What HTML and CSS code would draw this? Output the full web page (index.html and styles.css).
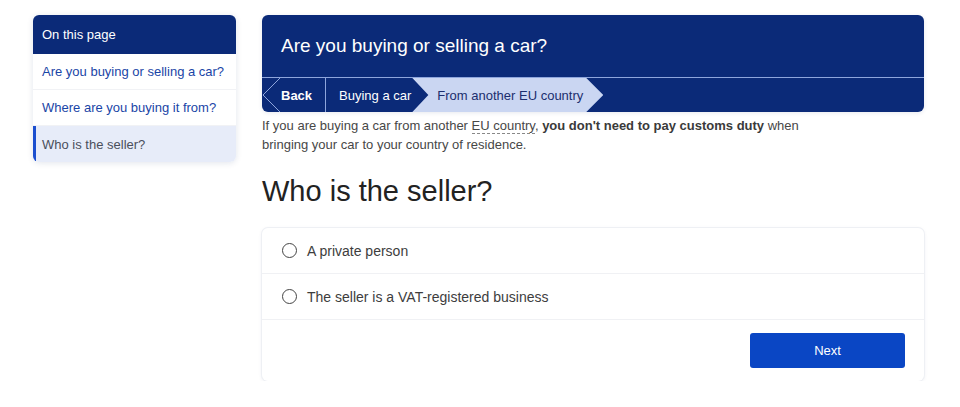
FILE: index.html
```html
<!DOCTYPE html>
<html lang="en">
<head>
<meta charset="utf-8">
<title>Who is the seller?</title>
<link rel="stylesheet" href="styles.css">
</head>
<body>
<div class="page">
  <nav class="toc">
    <div class="toc-head">On this page</div>
    <a class="toc-item" href="#">Are you buying or selling a car?</a>
    <a class="toc-item" href="#">Where are you buying it from?</a>
    <a class="toc-item active" href="#">Who is the seller?</a>
  </nav>
  <main class="main">
    <section class="hero">
      <h1 class="hero-title">Are you buying or selling a car?</h1>
      <div class="crumbs">
        <a class="crumb back" href="#"><svg class="back-chev" width="19" height="34" viewBox="0 0 19 34"><polyline points="18,0 1,17 18,34" fill="none" stroke="#8ea5dc" stroke-width="1"/></svg><span>Back</span></a>
        <a class="crumb mid" href="#">Buying a car</a>
        <span class="crumb current">From another EU country</span>
      </div>
    </section>
    <p class="intro"><span>If you are buying a car from another </span><abbr class="abbr" title="European Union">EU country</abbr><span>, </span><strong>you don't need to pay customs duty</strong><span> when </span><span>bringing your car to your country of residence.</span></p>
    <h2 class="question">Who is the seller?</h2>
    <form class="options">
      <label class="option"><span class="radio"></span>A private person</label>
      <label class="option"><span class="radio"></span>The seller is a VAT-registered business</label>
      <div class="actions"><button type="button" class="next">Next</button></div>
    </form>
  </main>
</div>
</body>
</html>
```
FILE: styles.css
```css
* { box-sizing: border-box; }
html, body { margin: 0; background: #ffffff; }
body {
  font-family: "Liberation Sans", Arial, sans-serif;
  font-size: 13px;
  color: #454545;
}
.page {
  display: flex;
  align-items: flex-start;
  gap: 26px;
  padding: 15px 36px 0 33px;
}
.toc {
  width: 203px;
  flex: none;
  display: flex;
  flex-direction: column;
  border-radius: 6px;
  overflow: hidden;
  background: #fff;
  box-shadow: 0 1px 6px rgba(20, 40, 100, 0.12);
}
.toc-head {
  background: #0b2a78;
  color: #fff;
  height: 39px;
  display: flex;
  align-items: center;
  padding: 0 9px;
  font-size: 13px;
}
.toc-item {
  height: 36px;
  display: flex;
  align-items: center;
  padding: 0 9px;
  color: #1a45a6;
  text-decoration: none;
  border-bottom: 1px solid #f1f2f5;
  font-size: 13px;
}
.toc-item.active {
  background: #e7ecf9;
  color: #4a4f5c;
  border-left: 3px solid #1c4fcf;
  padding-left: 6px;
  border-bottom: none;
}
.main {
  flex: 1;
  min-width: 0;
  display: flex;
  flex-direction: column;
}
.hero {
  background: #0b2a78;
  border-radius: 6px;
  overflow: hidden;
  box-shadow: 0 1px 4px rgba(20, 40, 100, 0.1);
}
.hero-title {
  margin: 0;
  height: 63px;
  display: flex;
  align-items: center;
  padding: 0 19px;
  color: #fff;
  font-size: 19px;
  font-weight: normal;
  border-bottom: 1px solid #8ea5dc;
}
.crumbs {
  display: flex;
  height: 34px;
  align-items: stretch;
}
.crumb {
  display: flex;
  align-items: center;
  color: #fff;
  text-decoration: none;
  font-size: 13px;
}
.back {
  font-weight: bold;
  padding-right: 13px;
  border-right: 1px solid #8ea5dc;
}
.back-chev { display: block; flex: none; }
.mid {
  padding: 0 1px 0 13px;
}
.current {
  background: #cad6f2;
  color: #1b2e6e;
  padding: 0 20px 0 25px;
  clip-path: polygon(0 0, calc(100% - 17px) 0, 100% 50%, calc(100% - 17px) 100%, 0 100%, 16px 50%);
}
.intro {
  margin: 4px 0 0;
  line-height: 19px;
  max-width: 545px;
  font-size: 13px;
  color: #474747;
}
.intro strong { color: #3a3a3a; }
.abbr {
  text-decoration: none;
  border-bottom: 1px dashed #888;
}
.question {
  margin: 20px 0 20px;
  font-size: 29px;
  line-height: 34px;
  font-weight: normal;
  color: #222;
}
.options {
  margin: 0;
  background: #fff;
  border-radius: 6px;
  box-shadow: 0 0 0 1px #eef0f4, 0 1px 4px rgba(20, 40, 100, 0.08);
  display: flex;
  flex-direction: column;
}
.option {
  height: 46px;
  display: flex;
  align-items: center;
  gap: 10px;
  padding: 0 20px;
  font-size: 14px;
  color: #3d3d3d;
  border-bottom: 1px solid #f0f1f4;
}
.radio {
  width: 15px;
  height: 15px;
  border: 1.5px solid #444;
  border-radius: 50%;
  flex: none;
}
.actions {
  display: flex;
  justify-content: flex-end;
  padding: 13px 19px;
}
.next {
  width: 155px;
  height: 35px;
  border: none;
  border-radius: 3px;
  background: #0a46c4;
  color: #fff;
  font-family: inherit;
  font-size: 13px;
}
```
